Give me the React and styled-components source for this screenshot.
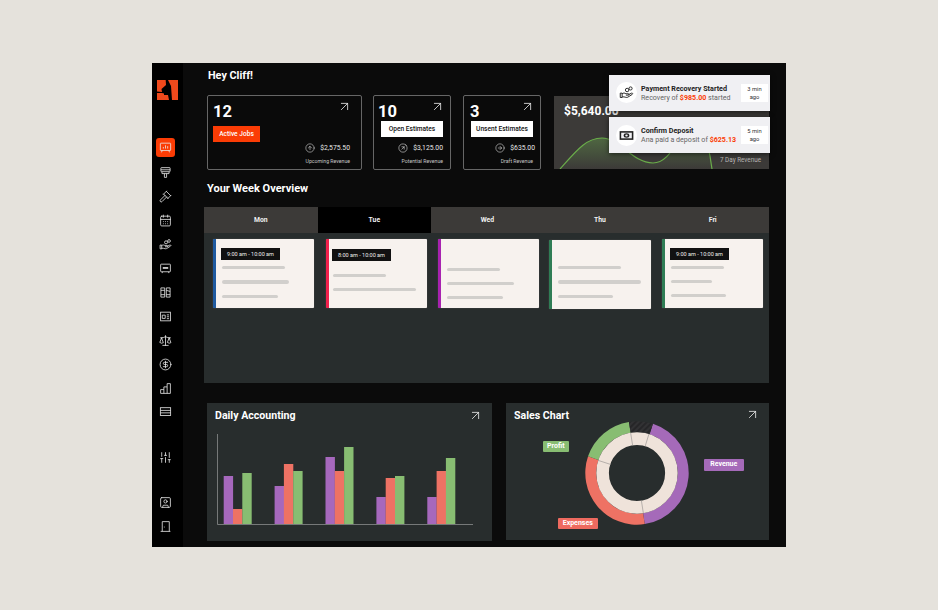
import React from "react";
import styled, { createGlobalStyle } from "styled-components";
import {
  ArrowUpRight, CircleArrowUp, CircleArrowRight, Gavel, CalendarDays, Scale, CircleDollarSign,
  SlidersVertical, SquareUser,
} from "lucide-react";

const GlobalStyle = createGlobalStyle`
  html, body {
    margin: 0;
    padding: 0;
    background: #e5e2dc;
    font-family: Roboto, "Liberation Sans", sans-serif;
  }
`;

const Frame = styled.div`
  display: flex;
  position: relative;
  width: 634px;
  height: 484px;
  margin: 63px 0 0 152px;
  background: #0b0b0b;
  color: #fff;
`;

const Sidebar = styled.nav`
  display: flex;
  flex-direction: column;
  align-items: center;
  box-sizing: border-box;
  width: 31px;
  height: 484px;
  padding-right: 4px;
  background: #000;
`;

const Logo = styled.svg`
  width: 21px;
  height: 20px;
  margin: 17px 0 0 3px;
`;

const NavList = styled.div`
  display: flex;
  flex-direction: column;
  align-items: center;
  margin-top: 38px;
`;

const NavItem = styled.div`
  display: flex;
  align-items: center;
  justify-content: center;
  width: 19px;
  height: 19px;
  margin-top: ${props => props.top ?? 5}px;
  border-radius: 3px;
  background: ${props => (props.active ? "#fb3c05" : "transparent")};
  color: #e8e8e8;
`;

const Glyph = styled.svg`
  width: ${props => props.size || 13}px;
  height: ${props => props.size || 13}px;
  fill: none;
  stroke: currentColor;
  stroke-width: 1.5;
`;

const Main = styled.main`
  flex: 1;
  padding: 5px 16px 0 21px;
`;

const Greeting = styled.h1`
  margin: 0 0 0 4px;
  font-size: 10.8px;
  line-height: 16px;
  font-weight: 700;
`;

const StatRow = styled.div`
  display: flex;
  margin: 11px 0 0 3px;
  height: 75px;
`;

const StatCard = styled.section`
  box-sizing: border-box;
  width: ${props => props.width}px;
  margin-right: ${props => props.gap}px;
  padding: 6px ${props => props.padRight}px 0 ${props => props.padLeft}px;
  border: 1px solid #666;
  border-radius: 2px;
  background: #0a0a0a;
`;

const StatTop = styled.div`
  display: flex;
  justify-content: space-between;
  height: 19px;
`;

const StatNumber = styled.div`
  font-size: 16.5px;
  line-height: 19px;
  font-weight: 700;
`;

const CardArrow = styled(ArrowUpRight)`
  flex: none;
  width: 15px;
  height: 15px;
  margin: -3px -2px -1px;
  color: #eee;
`;

const StatLabel = styled.div`
  display: flex;
  align-items: center;
  justify-content: center;
  width: ${props => props.width}px;
  height: 16px;
  margin: ${props => props.top}px 0 0 ${props => props.left}px;
  background: ${props => (props.primary ? "#fb3c05" : "#fff")};
  color: ${props => (props.primary ? "#fff" : "#111")};
  font-size: 6.6px;
  font-weight: 500;
`;

const Money = styled.div`
  display: flex;
  align-items: center;
  justify-content: flex-end;
  gap: 5px;
  height: 12px;
  margin: ${props => props.top}px ${props => props.right || 0}px 0 0;
  font-size: 6.8px;
  color: #e8e8e8;
`;

const MoneyNote = styled.div`
  margin: 3px ${props => props.right || 0}px 0 0;
  text-align: right;
  font-size: 5.2px;
  line-height: 8px;
  color: #c4c4c4;
`;

const RevenueCard = styled.section`
  position: relative;
  width: 215px;
  height: 73px;
  margin: 1px 0 0 2px;
  background: #3c3a38;
  overflow: hidden;
`;

const RevenueValue = styled.div`
  padding: 8px 0 0 10px;
  font-size: 12px;
  line-height: 15px;
  font-weight: 700;
`;

const RevenueChart = styled.svg`
  position: absolute;
  left: 0;
  bottom: 0;
`;

const RevenueNote = styled.div`
  position: absolute;
  right: 8px;
  bottom: 5px;
  font-size: 6.3px;
  color: #b9b7b5;
`;

const Toasts = styled.div`
  position: absolute;
  top: 11.5px;
  left: 457px;
  display: flex;
  flex-direction: column;
  gap: 6.5px;
`;

const Toast = styled.div`
  display: flex;
  align-items: center;
  box-sizing: border-box;
  width: 161px;
  height: 36px;
  padding: 0 2px 0 7px;
  background: #f0f0f3;
  box-shadow: 0 1px 5px rgba(0, 0, 0, 0.6);
  color: #222;
`;

const ToastIcon = styled.div`
  display: flex;
  align-items: center;
  justify-content: center;
  flex: none;
  width: 21px;
  height: 21px;
  margin-right: 4px;
  border-radius: 50%;
  background: #fff;
  color: #222;
`;

const ToastText = styled.div`
  flex: 1;
  white-space: nowrap;
`;

const ToastTitle = styled.div`
  font-size: 7.2px;
  line-height: 9px;
  font-weight: 700;
`;

const ToastBody = styled.div`
  font-size: 7.1px;
  line-height: 9px;
  color: #666;
  b {
    color: #fb3c05;
    font-weight: 700;
  }
`;

const ToastTime = styled.div`
  flex: none;
  box-sizing: border-box;
  width: 27px;
  padding: 1px 0;
  background: #fff;
  text-align: center;
  font-size: 5.8px;
  line-height: 8px;
  color: #333;
`;

const SectionTitle = styled.h2`
  margin: 11px 0 0 3px;
  font-size: 11px;
  line-height: 16px;
  font-weight: 700;
`;

const WeekPanel = styled.section`
  width: 565px;
  height: 176px;
  margin-top: 10px;
  background: #282d2d;
`;

const DayTabs = styled.div`
  display: grid;
  grid-template-columns: 113.7px 113.3px repeat(3, 112.7px);
  height: 26px;
  background: #3c3a38;
`;

const DayTab = styled.div`
  display: flex;
  align-items: center;
  justify-content: center;
  background: ${props => (props.active ? "#000" : "transparent")};
  font-size: 6.8px;
  font-weight: 700;
  color: #f0f0f0;
`;

const JobGrid = styled.div`
  display: grid;
  grid-template-columns: 113px 112px 111px 113px 101px;
  padding: 6px 0 0 9px;
`;

const JobCard = styled.article`
  box-sizing: border-box;
  width: ${props => props.width || 101}px;
  height: 69px;
  margin-top: ${props => props.shift || 0}px;
  padding: ${props => props.padTop}px 0 0 ${props => props.padLeft || 5}px;
  border-left: 3px solid ${props => props.accent};
  border-radius: 1px;
  background: #f7f2ee;
  box-shadow: 0 0 1px #777;
`;

const TimeTag = styled.div`
  box-sizing: border-box;
  width: 59px;
  height: 12px;
  margin-bottom: ${props => props.below}px;
  background: #111;
  color: #eee;
  text-align: center;
  font-size: 5.5px;
  line-height: 12px;
`;

const Lines = styled.div`
  display: flex;
  flex-direction: column;
  gap: 11px;
  padding-left: 1px;
`;

const Line = styled.div`
  width: ${props => props.width}px;
  height: 3.3px;
  border-radius: 2px;
  background: #d1cfcc;
`;

const BottomRow = styled.div`
  display: flex;
  margin: 20px 0 0 3px;
`;

const ChartCard = styled.section`
  position: relative;
  box-sizing: border-box;
  width: ${props => props.width}px;
  height: 137.5px;
  margin: ${props => props.top}px ${props => props.gap}px 0 0;
  padding: 6px 11px 0 8px;
  background: #282d2d;
`;

const ChartHead = styled.div`
  display: flex;
  justify-content: space-between;
  align-items: center;
`;

const ChartTitle = styled.h3`
  margin: 0;
  font-size: 10.6px;
  line-height: 14px;
  font-weight: 700;
`;

const BarsSvg = styled.svg`
  display: block;
  margin-top: 9px;
`;

const Donut = styled.svg`
  display: block;
  margin: -5px 0 0 68px;
`;

const Legend = styled.div`
  position: absolute;
  left: ${props => props.left}px;
  top: ${props => props.top}px;
  width: ${props => props.width}px;
  border-radius: 1px;
  background: ${props => props.color};
  text-align: center;
  font-size: 7px;
  line-height: 11.5px;
  font-weight: 700;
  color: #fff;
`;

const HandIcon = ({ size }) => (
  <Glyph size={size} viewBox="0 0 24 24">
    <path d="M2 13h3v7H2z" />
    <path d="M5 14c2-1.500 4-1.500 6 0h4c1.500 0 1.500 2.200 0 2.200h-4" />
    <path d="M15 15.500l5-2.500c1.800-.6 2.600 1.200 1.200 2L14 19.500c-1 .5-2 .5-3 .2L8 19H5" />
    <circle cx="13" cy="8" r="2.800" />
    <circle cx="18.500" cy="5.500" r="2.500" />
  </Glyph>
);

const BoardIcon = () => (
  <Glyph viewBox="0 0 24 24">
    <rect x="2.500" y="4" width="19" height="13.500" rx="1" />
    <path d="M8 14v-3M12 14V8M16 14v-4.500M6 17.500L4.500 21M18 17.500l1.500 3.500" />
  </Glyph>
);

const BrushIcon = () => (
  <Glyph viewBox="0 0 24 24">
    <rect x="3.500" y="3" width="17" height="7.500" rx="1" />
    <path d="M3.500 7h17M5.500 10.500v3.500h13v-3.500M10 14v7h4v-7" />
  </Glyph>
);

const ScreenIcon = () => (
  <Glyph viewBox="0 0 24 24">
    <rect x="3" y="4" width="18" height="14" rx="1" />
    <path d="M7 11h10" strokeWidth="3" />
    <path d="M6 18v2.500M18 18v2.500" />
  </Glyph>
);

const BooksIcon = () => (
  <Glyph viewBox="0 0 24 24">
    <path d="M3.500 3.500h7v17h-7zM13.500 3.500h7v17h-7z" />
    <path d="M3.500 8h7M3.500 16h7M13.500 8l7 2M13.500 16h7" />
  </Glyph>
);

const IdIcon = () => (
  <Glyph viewBox="0 0 24 24">
    <rect x="3" y="4" width="18" height="16" />
    <path d="M6 9.500h5.500v6H6zM14.500 9h4M14.500 12.500h4M14.500 16h4" />
  </Glyph>
);

const StepsIcon = () => (
  <Glyph viewBox="0 0 24 24">
    <path d="M3 21v-7h6V9h6V3h6v18zM9 14v7M15 9v12" />
  </Glyph>
);

const TableIcon = () => (
  <Glyph viewBox="0 0 24 24">
    <rect x="2.500" y="5" width="19" height="14.500" />
    <path d="M2.500 10h19M2.500 14.500h19" />
  </Glyph>
);

const DoorIcon = () => (
  <Glyph viewBox="0 0 24 24">
    <path d="M6 21V3h13v18M3 21h18M9 13h1.500" />
  </Glyph>
);

const BanknoteIcon = () => (
  <svg width="15" height="15" viewBox="0 0 24 24">
    <rect x="1" y="5" width="22" height="14" fill="#222" />
    <rect x="3.500" y="7.500" width="17" height="9" fill="#f0f0f3" />
    <ellipse cx="12" cy="12" rx="4.500" ry="3.500" fill="#222" />
    <ellipse cx="12" cy="12" rx="2" ry="1.500" fill="#f0f0f3" />
  </svg>
);

const lucideProps = { size: 13, strokeWidth: 1.5 };

const navItems = [
  { el: <BoardIcon />, top: 0, active: true },
  { el: <BrushIcon />, top: 6 },
  { el: <Gavel {...lucideProps} /> },
  { el: <CalendarDays {...lucideProps} /> },
  { el: <HandIcon /> },
  { el: <ScreenIcon /> },
  { el: <BooksIcon /> },
  { el: <IdIcon /> },
  { el: <Scale {...lucideProps} /> },
  { el: <CircleDollarSign {...lucideProps} /> },
  { el: <StepsIcon /> },
  { el: <TableIcon />, top: 4 },
  { el: <SlidersVertical {...lucideProps} />, top: 27 },
  { el: <SquareUser {...lucideProps} />, top: 26 },
  { el: <DoorIcon /> },
];

const jobs = [
  { accent: "#1f5aa0", padTop: 9, tag: "9:00 am - 10:00 am", below: 6, lines: [63, 67, 56] },
  { accent: "#f0204c", padTop: 10, padLeft: 3, tag: "8:00 am - 10:00 am", below: 12.5, lines: [53, 83] },
  { accent: "#a822b0", padTop: 28.5, lines: [53, 67, 56] },
  { accent: "#2f7d55", padTop: 26, width: 102, shift: 1, lines: [63, 83, 55] },
  { accent: "#2f7d55", padTop: 9, tag: "9:00 am - 10:00 am", below: 5.5, lines: [53, 41, 55] },
];

const bars = [
  [476, 509, 473],
  [486, 464, 471],
  [457, 471, 447],
  [497, 478, 476],
  [497, 471, 458],
];
const barColors = ["#a668bd", "#ee7264", "#88bd72"];

// angle in degrees, clockwise from 12 o'clock
function polar(r, a) {
  const t = ((a - 90) * Math.PI) / 180;
  return [r * Math.cos(t), r * Math.sin(t)];
}

function arc(r0, r1, a0, a1) {
  const [x0, y0] = polar(r1, a0);
  const [x1, y1] = polar(r1, a1);
  const [x2, y2] = polar(r0, a1);
  const [x3, y3] = polar(r0, a0);
  const large = a1 - a0 > 180 ? 1 : 0;
  return `M${x0} ${y0}A${r1} ${r1} 0 ${large} 1 ${x1} ${y1}L${x2} ${y2}A${r0} ${r0} 0 ${large} 0 ${x3} ${y3}Z`;
}

const dividers = [351, 17, 171, 288];

function AccountingChart() {
  return (
    <BarsSvg width="262" height="100" viewBox="215 432 262 100">
      {bars.map((group, g) =>
        group.map((top, i) => (
          <rect key={`${g}-${i}`} x={223.7 + g * 50.9 + i * 9.3} y={top} width="9.4" height={524 - top} fill={barColors[i]} />
        ))
      )}
      <path d="M217.500 434V524.500H473" fill="none" stroke="#8a8d8d" strokeWidth="0.8" />
    </BarsSvg>
  );
}

function SalesDonut() {
  return (
    <Donut width="110" height="110" viewBox="-55 -55 110 110">
      <defs>
        <pattern id="hatch" width="4" height="4" patternUnits="userSpaceOnUse" patternTransform="rotate(45)">
          <rect width="4" height="4" fill="#262628" />
          <rect width="2" height="4" fill="#323234" />
        </pattern>
      </defs>
      <path d={arc(40.7, 51.7, 18, 171.4)} fill="#a56ab9" />
      <path d={arc(40.7, 51.7, 171.4, 288.8)} fill="#ee7264" />
      <path d={arc(40.7, 51.7, 288.8, 351)} fill="#88bd72" />
      <path d={arc(40.7, 51.7, 351, 378)} fill="url(#hatch)" />
      <circle r="34.4" fill="none" stroke="#efe3da" strokeWidth="12.6" />
      {dividers.map(a => {
        const [x0, y0] = polar(28, a);
        const [x1, y1] = polar(40.7, a);
        return <line key={a} x1={x0} y1={y0} x2={x1} y2={y1} stroke="#9d9a96" strokeWidth="0.7" />;
      })}
    </Donut>
  );
}

export default function App() {
  return (
    <>
      <GlobalStyle />
      <Frame>
        <Sidebar>
          <Logo viewBox="0 0 21 20">
            <path
              fillRule="evenodd"
              fill="#f0491c"
              d="M0 0H21V20H0zM8.700 0L9 5 4.500 9 5 12 0 11.500V13H5L7 13.500V15H11L12 20H15L14 6 11 0z"
            />
          </Logo>
          <NavList>
            {navItems.map((item, i) => (
              <NavItem key={i} top={item.top} active={item.active}>
                {item.el}
              </NavItem>
            ))}
          </NavList>
        </Sidebar>
        <Main>
          <Greeting>Hey Cliff!</Greeting>
          <StatRow>
            <StatCard width={155} gap={11} padLeft={5} padRight={11}>
              <StatTop>
                <StatNumber>12</StatNumber>
                <CardArrow strokeWidth={1.3} />
              </StatTop>
              <StatLabel primary width={47} left={0} top={5}>Active Jobs</StatLabel>
              <Money top={0}>
                <CircleArrowUp size={10} strokeWidth={1.3} />
                $2,575.50
              </Money>
              <MoneyNote>Upcoming Revenue</MoneyNote>
            </StatCard>
            <StatCard width={78} gap={12} padLeft={4} padRight={7}>
              <StatTop>
                <StatNumber>10</StatNumber>
                <CardArrow strokeWidth={1.3} />
              </StatTop>
              <StatLabel width={62} left={3} top={0}>Open Estimates</StatLabel>
              <Money top={5}>
                <CircleArrowRight size={10} strokeWidth={1.3} style={{ transform: "rotate(-45deg)" }} />
                $3,125.00
              </Money>
              <MoneyNote>Potential Revenue</MoneyNote>
            </StatCard>
            <StatCard width={78} gap={11} padLeft={6} padRight={7}>
              <StatTop>
                <StatNumber>3</StatNumber>
                <CardArrow strokeWidth={1.3} />
              </StatTop>
              <StatLabel width={62} left={1} top={0}>Unsent Estimates</StatLabel>
              <Money top={5} right={-2}>
                <CircleArrowRight size={10} strokeWidth={1.3} />
                $635.00
              </Money>
              <MoneyNote>Draft Revenue</MoneyNote>
            </StatCard>
            <RevenueCard>
              <RevenueValue>$5,640.00</RevenueValue>
              <RevenueChart width="215" height="73" viewBox="0 0 215 73">
                <defs>
                  <linearGradient id="rev" x1="0" y1="0" x2="0" y2="1">
                    <stop offset="0" stopColor="#6aa84f" stopOpacity="0.55" />
                    <stop offset="1" stopColor="#6aa84f" stopOpacity="0" />
                  </linearGradient>
                </defs>
                <path d="M6 73C22 55 32 42 48 42C66 42 78 67 99 67C115 67 122 45 132 35C142 28 150 30 156 60L158 73Z" fill="url(#rev)" />
                <path d="M6 73C22 55 32 42 48 42C66 42 78 67 99 67C115 67 122 45 132 35C142 28 150 30 156 60L158 73" fill="none" stroke="#6aad4a" strokeWidth="1.2" />
              </RevenueChart>
              <RevenueNote>7 Day Revenue</RevenueNote>
            </RevenueCard>
          </StatRow>
          <SectionTitle>Your Week Overview</SectionTitle>
          <WeekPanel>
            <DayTabs>
              <DayTab>Mon</DayTab>
              <DayTab active>Tue</DayTab>
              <DayTab>Wed</DayTab>
              <DayTab>Thu</DayTab>
              <DayTab>Fri</DayTab>
            </DayTabs>
            <JobGrid>
              {jobs.map((job, i) => (
                <JobCard key={i} accent={job.accent} padTop={job.padTop} padLeft={job.padLeft} width={job.width} shift={job.shift}>
                  {job.tag && <TimeTag below={job.below}>{job.tag}</TimeTag>}
                  <Lines>
                    {job.lines.map((w, j) => <Line key={j} width={w} />)}
                  </Lines>
                </JobCard>
              ))}
            </JobGrid>
          </WeekPanel>
          <BottomRow>
            <ChartCard width={285} top={0} gap={14}>
              <ChartHead>
                <ChartTitle>Daily Accounting</ChartTitle>
                <CardArrow strokeWidth={1.3} />
              </ChartHead>
              <AccountingChart />
            </ChartCard>
            <ChartCard width={262.5} top={-0.5} gap={0}>
              <ChartHead>
                <ChartTitle>Sales Chart</ChartTitle>
                <CardArrow strokeWidth={1.3} />
              </ChartHead>
              <SalesDonut />
              <Legend color="#88bd72" left={37} top={38} width={25.5}>Profit</Legend>
              <Legend color="#a56ab9" left={198} top={56.5} width={39.5}>Revenue</Legend>
              <Legend color="#ee6a5f" left={52} top={115} width={39.5}>Expenses</Legend>
            </ChartCard>
          </BottomRow>
        </Main>
        <Toasts>
          <Toast>
            <ToastIcon><HandIcon size={15} /></ToastIcon>
            <ToastText>
              <ToastTitle>Payment Recovery Started</ToastTitle>
              <ToastBody>Recovery of <b>$985.00</b> started</ToastBody>
            </ToastText>
            <ToastTime>3 min<br />ago</ToastTime>
          </Toast>
          <Toast>
            <ToastIcon><BanknoteIcon /></ToastIcon>
            <ToastText>
              <ToastTitle>Confirm Deposit</ToastTitle>
              <ToastBody>Ana paid a deposit of <b>$625.13</b></ToastBody>
            </ToastText>
            <ToastTime>5 min<br />ago</ToastTime>
          </Toast>
        </Toasts>
      </Frame>
    </>
  );
}
